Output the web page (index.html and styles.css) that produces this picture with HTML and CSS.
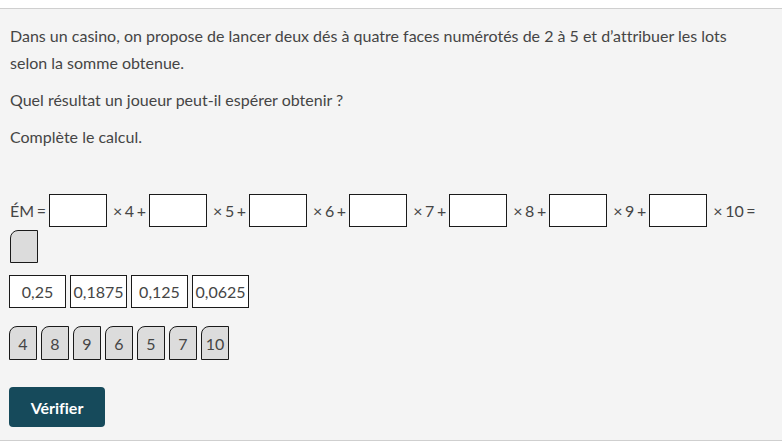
FILE: index.html
```html
<!DOCTYPE html>
<html lang="fr">
<head>
<meta charset="utf-8">
<link rel="stylesheet" href="styles.css">
</head>
<body>
<div class="panel">
  <p class="txt">Dans un casino, on propose de lancer deux dés à quatre faces numérotés de 2 à 5 et d’attribuer les lots selon la somme obtenue.</p>
  <p class="txt">Quel résultat un joueur peut-il espérer obtenir ?</p>
  <p class="txt">Complète le calcul.</p>

  <div class="eq">
    <span class="t">ÉM =</span><span class="slot"></span>
    <span class="t">× 4 +</span><span class="slot"></span>
    <span class="t">× 5 +</span><span class="slot"></span>
    <span class="t">× 6 +</span><span class="slot"></span>
    <span class="t">× 7 +</span><span class="slot"></span>
    <span class="t">× 8 +</span><span class="slot"></span>
    <span class="t">× 9 +</span><span class="slot"></span>
    <span class="t">× 10 =</span><span class="drop"></span>
  </div>

  <div class="cards">
    <span class="card">0,25</span>
    <span class="card">0,1875</span>
    <span class="card">0,125</span>
    <span class="card">0,0625</span>
  </div>

  <div class="tiles">
    <span class="tile">4</span>
    <span class="tile">8</span>
    <span class="tile">9</span>
    <span class="tile">6</span>
    <span class="tile">5</span>
    <span class="tile">7</span>
    <span class="tile">10</span>
  </div>

  <button class="btn">Vérifier</button>
</div>
</body>
</html>
```
FILE: styles.css
```css
html, body {
  margin: 0;
  padding: 0;
  background: #ffffff;
}
body {
  padding-top: 8px;
  font-family: Lato, "Noto Sans", sans-serif;
  font-size: 16px;
  color: #454545;
  font-variant-ligatures: none;
}
.panel {
  background: #f4f4f4;
  border-top: 1px solid #cfcfcf;
  border-bottom: 1px solid #cfcfcf;
  height: 433px;
  box-sizing: border-box;
  padding: 13px 10px 0 10px;
}
.txt {
  margin: 0 0 10px 0;
  line-height: 27px;
  padding-right: 40px;
}
.eq {
  margin-top: 44px;
  display: flex;
  flex-wrap: wrap;
  align-items: center;
  row-gap: 3px;
}
.t {
  margin-right: 3px;
  white-space: nowrap;
  word-spacing: -1.5px;
}
.slot {
  width: 58px;
  height: 33px;
  box-sizing: border-box;
  background: #fff;
  border: 1px solid #1a1a1a;
  margin-right: 6px;
}
.drop {
  width: 28px;
  height: 33px;
  box-sizing: border-box;
  background: #dcdcdc;
  border: 1px solid #1a1a1a;
  border-top-left-radius: 8px;
}
.cards {
  margin-top: 12px;
  margin-left: -1px;
  display: flex;
  gap: 4px;
}
.card {
  width: 57px;
  height: 33px;
  box-sizing: border-box;
  border: 1px solid #1a1a1a;
  background: #fff;
  display: flex;
  align-items: center;
  justify-content: center;
}
.tiles {
  margin-top: 18px;
  margin-left: -1px;
  display: flex;
  gap: 4px;
}
.tile {
  width: 28px;
  height: 34px;
  box-sizing: border-box;
  border: 1px solid #1a1a1a;
  border-top-left-radius: 8px;
  background: #dcdcdc;
  display: flex;
  align-items: center;
  justify-content: center;
}
.btn {
  margin-top: 27px;
  margin-left: -1px;
  display: block;
  width: 96px;
  height: 40px;
  border: none;
  border-radius: 4px;
  background: #164a5b;
  color: #fff;
  font-family: Lato, "Noto Sans", sans-serif;
  font-size: 16px;
  font-weight: 700;
  font-variant-ligatures: none;
}
```
